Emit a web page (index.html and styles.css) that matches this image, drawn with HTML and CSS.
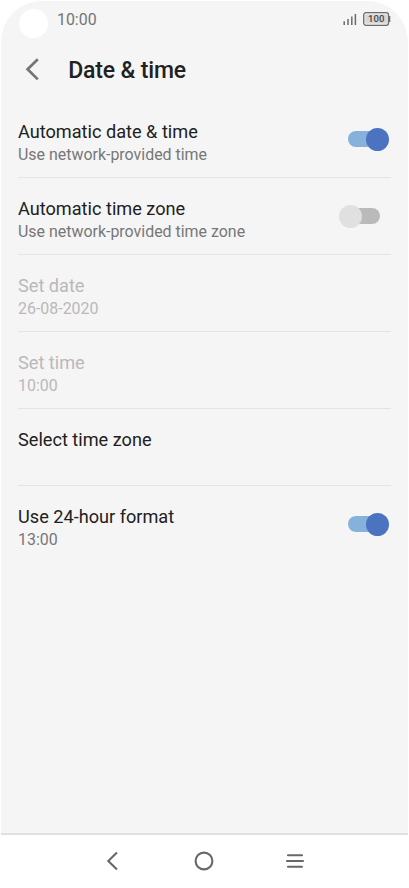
FILE: index.html
```html
<!DOCTYPE html>
<html lang="en">
<head>
<meta charset="utf-8">
<title>Date &amp; time</title>
<link rel="stylesheet" href="styles.css">
</head>
<body>
<div class="phone">
  <main class="screen">
    <div class="status">
      <span class="camera"></span>
      <span class="clock">10:00</span>
      <svg class="signal" width="14" height="12" viewBox="0 0 14 12"><path d="M1.2 8.2V12M5 6v6M8.8 3.5V12M12.4 1v11" stroke="#6c6c6c" stroke-width="1.5"/></svg>
      <svg class="battery" width="28" height="14" viewBox="0 0 28 14">
        <rect x="0.7" y="0.7" width="24.8" height="12.6" rx="2.2" fill="#eeeeee" stroke="#6c6c6c" stroke-width="1.3"/>
        <rect x="2.4" y="2.4" width="21.4" height="9.2" rx="0.6" fill="#d6d6d6"/>
        <path d="M26.6 4v6" stroke="#6c6c6c" stroke-width="1.4"/>
        <text x="13.2" y="10.4" text-anchor="middle">100</text>
      </svg>
    </div>
    <header class="header">
      <svg class="back" width="14" height="24" viewBox="0 0 14 24"><path d="M12.8 1.2L2.6 11.2l10.2 10.2" fill="none" stroke="#747474" stroke-width="2.7"/></svg>
      <h1 class="title">Date &amp; time</h1>
    </header>
    <section class="list">
      <div class="row"><div class="text"><div class="label">Automatic date &amp; time</div><div class="sub">Use network-provided time</div></div><span class="toggle on"></span></div>
      <div class="row"><div class="text"><div class="label">Automatic time zone</div><div class="sub">Use network-provided time zone</div></div><span class="toggle"></span></div>
      <div class="row disabled"><div class="text"><div class="label">Set date</div><div class="sub">26-08-2020</div></div></div>
      <div class="row disabled"><div class="text"><div class="label">Set time</div><div class="sub">10:00</div></div></div>
      <div class="row"><div class="text"><div class="label">Select time zone</div></div></div>
      <div class="row"><div class="text"><div class="label">Use 24-hour format</div><div class="sub">13:00</div></div><span class="toggle on"></span></div>
    </section>
  </main>
  <nav class="nav">
    <svg width="20" height="20" viewBox="0 0 20 20"><path d="M14 1.4L5.3 10l8.7 8.6"/></svg>
    <svg width="20" height="20" viewBox="0 0 20 20"><circle cx="10" cy="10" r="8.4"/></svg>
    <svg width="20" height="20" viewBox="0 0 20 20"><path d="M3 4.2h14M2 10h16M3 15.8h14" stroke-linecap="round"/></svg>
  </nav>
</div>
</body>
</html>
```
FILE: styles.css
```css
* { box-sizing: border-box; }
body { margin: 0; background: #fff; font-family: Roboto, "Liberation Sans", sans-serif; color: #212121; }
.phone { width: 409px; height: 888px; display: flex; flex-direction: column; padding: 1px 1px 0; overflow: hidden; }
.screen { height: 834px; background: #f5f5f5; border-radius: 41px 41px 0 0; border-bottom: 2px solid #e0e0e0; }
.status { height: 38px; display: flex; align-items: flex-start; padding: 0 17px 0 18px; }
.camera { width: 29px; height: 29px; margin-top: 8px; border-radius: 50%; background: #fff; }
.clock { margin: 9px auto 0 9px; font-size: 15.9px; line-height: 20px; color: #747474; }
.signal { margin-top: 12px; }
.battery { margin: 10.5px 0 0 6px; font-size: 9.5px; font-weight: 500; fill: #484848; }
.header { height: 62px; display: flex; align-items: center; padding: 0 24px; }
.back { margin: 0 29.5px 0 0; }
.title { margin: 2px 0 0 -0.3px; font-size: 23px; line-height: 30px; font-weight: 500; letter-spacing: -0.15px; }
.list { padding: 0 17px; }
.row { height: 77px; display: flex; justify-content: space-between; padding: 19px 0 0; border-bottom: 1px solid #e4e4e4; }
.row:last-child { border-bottom: 0; }
.label { font-size: 18.15px; line-height: 23px; }
.sub { margin-top: 1px; font-size: 15.95px; line-height: 22px; color: #777; }
.disabled .label, .disabled .sub { color: #b9b9b9; }
.toggle { position: relative; width: 32px; height: 16px; margin: 11px 11.5px 0 0; border-radius: 8px; background: #bababa; }
.toggle::after { content: ""; position: absolute; top: -3.5px; left: -9px; width: 23px; height: 23px; border-radius: 50%; background: #e0e0e0; }
.toggle.on { background: #85b1da; }
.toggle.on::after { left: 18px; background: #4b73c0; }
.nav { height: 51px; display: flex; align-items: center; justify-content: center; gap: 71px; padding-right: 0.4px; }
.nav svg { fill: none; stroke: #686868; stroke-width: 2.1; }
```
